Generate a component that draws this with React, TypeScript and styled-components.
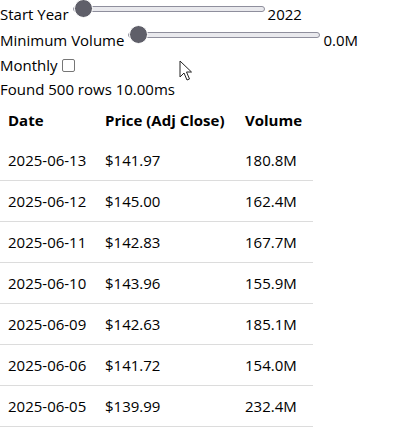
import React, { useState } from "react";
import styled, { createGlobalStyle } from "styled-components";

const rows = [
  { date: "2025-06-13", price: 141.97, volume: 180.8 },
  { date: "2025-06-12", price: 145.0, volume: 162.4 },
  { date: "2025-06-11", price: 142.83, volume: 167.7 },
  { date: "2025-06-10", price: 143.96, volume: 155.9 },
  { date: "2025-06-09", price: 142.63, volume: 185.1 },
  { date: "2025-06-06", price: 141.72, volume: 154.0 },
  { date: "2025-06-05", price: 139.99, volume: 232.4 },
];

const GlobalStyle = createGlobalStyle`
  body {
    margin: 0;
    background: #fff;
    color: #000;
    font-family: "Open Sans", "Noto Sans", sans-serif;
    font-size: 15px;
  }
`;

export default function App() {
  const [startYear, setStartYear] = useState(2022);
  const [minVolume, setMinVolume] = useState(0);
  const [monthly, setMonthly] = useState(false);

  return (
    <Page>
      <GlobalStyle />
      <Row $h={26}>
        <Text>Start Year</Text>
        <Slider
          type="range"
          min={2022}
          max={2025}
          value={startYear}
          onChange={(e) => setStartYear(Number(e.target.value))}
        />
        <Text>{startYear}</Text>
      </Row>
      <Row $h={25}>
        <Text>Minimum Volume</Text>
        <Slider
          type="range"
          min={0}
          max={300}
          value={minVolume}
          onChange={(e) => setMinVolume(Number(e.target.value))}
        />
        <Text>{minVolume.toFixed(1)}M</Text>
      </Row>
      <Row $h={24}>
        <Text>Monthly</Text>
        <Check
          type="checkbox"
          checked={monthly}
          onChange={(e) => setMonthly(e.target.checked)}
        />
      </Row>
      <Row $h={25}>
        <Text>Found 500 rows 10.00ms</Text>
      </Row>

      <Table>
        <colgroup>
          <col style={{ width: 97 }} />
          <col style={{ width: 140 }} />
          <col style={{ width: 76 }} />
        </colgroup>
        <thead>
          <tr>
            <Th>Date</Th>
            <Th>Price (Adj Close)</Th>
            <Th>Volume</Th>
          </tr>
        </thead>
        <tbody>
          {rows.map((r) => (
            <tr key={r.date}>
              <Td>{r.date}</Td>
              <Td>${r.price.toFixed(2)}</Td>
              <Td>{r.volume.toFixed(1)}M</Td>
            </tr>
          ))}
        </tbody>
      </Table>

      <Pointer width="13" height="21" viewBox="0 0 13 21">
        <path
          d="M1 1 L1 17 L5 13 L8 20 L10.5 19 L7.5 12 L12.5 12 Z"
          fill="#fff"
          stroke="#222"
          strokeWidth="1"
          strokeLinejoin="round"
        />
      </Pointer>
    </Page>
  );
}

const Page = styled.div`
  position: relative;
  height: 430px;
  overflow: hidden;
`;

const Row = styled.div<{ $h: number }>`
  display: flex;
  align-items: flex-start;
  height: ${(p) => p.$h}px;
`;

const Text = styled.span`
  margin-top: 4px;
  line-height: 20px;
  white-space: nowrap;
`;

const Slider = styled.input`
  -webkit-appearance: none;
  appearance: none;
  width: 192px;
  height: 17px;
  margin: 0 3px 0 4px;
  background: transparent;

  &::-webkit-slider-runnable-track {
    height: 6px;
    background: #e9e9ed;
    border: 1px solid #8f8f9d;
    border-radius: 4px;
    box-sizing: border-box;
  }

  &::-webkit-slider-thumb {
    -webkit-appearance: none;
    appearance: none;
    width: 19px;
    height: 19px;
    margin-top: -7.5px;
    border-radius: 50%;
    background: #5f5f69;
    border: 1.5px solid #fff;
    box-sizing: border-box;
  }
`;

const Check = styled.input`
  -webkit-appearance: none;
  appearance: none;
  width: 13px;
  height: 13px;
  margin: 8px 0 0 4px;
  border: 1px solid #767676;
  border-radius: 2px;
  background: #fff;
`;

const Table = styled.table`
  border-collapse: collapse;
  table-layout: fixed;
  width: 313px;
`;

const Th = styled.th`
  padding: 10px 8px;
  line-height: 20px;
  text-align: left;
  font-weight: 700;
  white-space: nowrap;
`;

const Td = styled.td`
  padding: 10px 8px;
  line-height: 20px;
  border-bottom: 1px solid #dcdcdc;
  white-space: nowrap;
`;

const Pointer = styled.svg`
  position: absolute;
  left: 179px;
  top: 60px;
`;
